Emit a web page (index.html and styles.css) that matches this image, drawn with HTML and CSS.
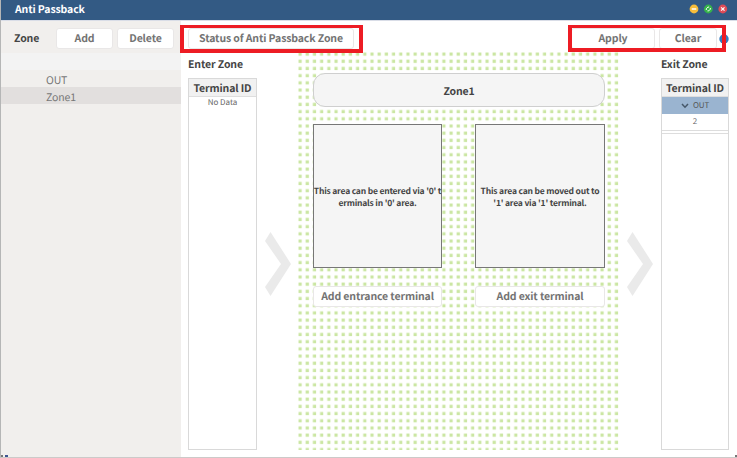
FILE: index.html
```html
<!DOCTYPE html>
<html lang="en">
<head>
<meta charset="utf-8">
<title>Anti Passback</title>
<link rel="stylesheet" href="styles.css">
</head>
<body>
<div class="window">
  <header class="titlebar">
    <span class="title">Anti Passback</span>
    <svg class="controls" width="40" height="10" viewBox="0 0 40 10">
      <circle cx="5" cy="5" r="4.400" fill="#f6bd3b"/><path d="M2.700 5h4.600" stroke="#fff" stroke-width="1.500"/>
      <circle cx="19.300" cy="5" r="4.400" fill="#35b34a"/><path d="M17.300 6V4.800l1.600-1.700h1.200M21.300 4v1.200l-1.600 1.700h-1.200" fill="none" stroke="#fff" stroke-width="1"/>
      <circle cx="33.800" cy="5" r="4.400" fill="#df4b57"/><path d="M32.100 3.300l3.400 3.400m0-3.400l-3.400 3.400" stroke="#fff" stroke-width="1.200"/>
    </svg>
  </header>
  <div class="body">
    <aside class="sidebar">
      <div class="side-tools">
        <span class="side-label">Zone</span>
        <button class="btn">Add</button>
        <button class="btn">Delete</button>
      </div>
      <div class="side-head"></div>
      <div class="zone">OUT</div>
      <div class="zone selected">Zone1</div>
    </aside>
    <main class="main">
      <div class="toolbar">
        <button class="btn status">Status of Anti Passback Zone</button>
        <button class="btn apply">Apply</button>
        <button class="btn clear">Clear</button>
        <svg class="help" width="10" height="10" viewBox="0 0 10 10"><circle cx="5" cy="5" r="4.700" fill="#347bc0"/><path d="M3.500 4c0-2 3-2 3-.2C6.500 4.700 5 4.700 5 6M5 7v1" fill="none" stroke="#dceaf7" stroke-width="1"/></svg>
      </div>
      <div class="content">
        <section class="side-zone">
          <h2>Enter Zone</h2>
          <div class="table">
            <div class="th">Terminal ID</div>
            <div class="empty">No Data</div>
          </div>
        </section>
        <svg class="arrow" width="26" height="64" viewBox="0 0 26 64"><path d="M5.500 0L26 32L5.500 64L0 55L16 32L0 9Z" fill="#eaeaea"/></svg>
        <section class="canvas">
          <svg class="dots" width="321" height="398">
            <defs><pattern id="dot" width="7.190" height="7.190" patternUnits="userSpaceOnUse"><rect x=".5" y=".5" width="3.200" height="3.200" fill="#cbe6a3"/></pattern></defs>
            <rect width="321" height="398" fill="url(#dot)"/>
          </svg>
          <div class="zone-name">Zone1</div>
          <div class="pair areas">
            <div class="area"><p>This area can be entered via '0' t<br>erminals in '0' area.</p></div>
            <div class="area"><p>This area can be moved out to<br>'1' area via '1' terminal.</p></div>
          </div>
          <div class="pair">
            <button class="btn">Add entrance terminal</button>
            <button class="btn">Add exit terminal</button>
          </div>
        </section>
        <svg class="arrow" width="26" height="64" viewBox="0 0 26 64"><path d="M5.500 0L26 32L5.500 64L0 55L16 32L0 9Z" fill="#eaeaea"/></svg>
        <section class="side-zone exit">
          <h2>Exit Zone</h2>
          <div class="table">
            <div class="th">Terminal ID</div>
            <div class="group"><svg width="8" height="6" viewBox="0 0 8 6"><path d="M1 1l3 3.200 3-3.200" fill="none" stroke="#46586a" stroke-width="1.500"/></svg>OUT</div>
            <div class="cell">2</div>
            <div class="strip"></div>
          </div>
        </section>
      </div>
    </main>
  </div>
  <div class="mark mark-status"></div>
  <div class="mark mark-actions"></div>
  <i class="speck speck-a"></i><i class="speck speck-b"></i><i class="speck speck-c"></i>
</div>
</body>
</html>
```

FILE: styles.css
```css
* { box-sizing: border-box; margin: 0; padding: 0; }
body {
  width: 737px; height: 458px; overflow: hidden; background: #fff;
  font-family: "Noto Sans CJK KR", "Noto Sans", sans-serif; color: #444;
  font-size: 10.5px; letter-spacing: -0.12px; text-rendering: geometricPrecision;
}
.window {
  position: relative; width: 737px; height: 458px;
  display: flex; flex-direction: column;
  border-left: 1px solid #b5b6b6; border-bottom: 1px solid #cccac9;
}
.titlebar {
  height: 20px; flex: none; background: #335a84; color: #fff;
  display: flex; align-items: center; justify-content: space-between;
  padding: 0 8px 2px 14px;
}
.title { font-weight: 700; line-height: 18px; padding-top: 1px; }
.body { flex: 1; display: flex; min-height: 0; border-top: 1px solid #d9dde7; }
.sidebar { width: 180px; flex: none; background: #f1efed; }
.side-tools { height: 32px; display: flex; align-items: center; padding: 3px 0 0 13px; gap: 4px; }
.side-label { width: 38px; font-weight: 700; line-height: 20px; padding-top: 1px; white-space: nowrap; }
.btn {
  height: 21px; border: 1px solid #e9e7e7; border-radius: 3px; background: #fff;
  font-family: inherit; font-weight: 700; font-size: inherit; letter-spacing: inherit;
  line-height: 18px; padding-top: 1px;
  color: #737373; text-align: center; white-space: nowrap;
  text-rendering: inherit;
}
.side-tools .btn { width: 57px; }
.side-head { height: 17px; background: #f3f3f3; }
.zone { height: 17px; padding-left: 45px; line-height: 21px; color: #777; }
.zone.selected { background: #e2dfde; }
.main { flex: 1; display: flex; flex-direction: column; min-width: 0; }
.toolbar { height: 32px; flex: none; display: flex; align-items: center; padding: 3px 0 0 7px; }
.status { width: 166px; }
.apply { width: 84px; margin-left: 217px; }
.clear { width: 58px; margin-left: 4px; }
.help { flex: none; margin-left: 2px; }
.content { flex: 1; display: flex; padding-left: 7px; }
.side-zone { width: 69px; flex: none; padding-top: 2px; }
.exit { margin-left: 1px; width: 68px; }
h2 { height: 23px; font-size: inherit; font-weight: 700; line-height: 19px; white-space: nowrap; }
.table { height: 372px; border: 1px solid #d9d9d9; }
.th {
  height: 18px; background: #f1f1f1; border-bottom: 1px solid #dedede;
  font-weight: 700; line-height: 19px; text-align: center; white-space: nowrap;
}
.empty { font-size: 8px; letter-spacing: 0; line-height: 11px; text-align: center; color: #666; }
.arrow { flex: none; margin: 179px 7px 0 8px; }
.canvas { position: relative; width: 321px; flex: none; height: 398px; padding: 21px 14px 0 15px; margin-top: -1px; }
.dots { position: absolute; left: 0; top: 0; z-index: -1; }
.zone-name {
  height: 34px; border: 1px solid #cfcfcf; border-radius: 12px; background: #f5f5f5;
  font-weight: 700; line-height: 35px; text-align: center;
}
.pair { display: grid; grid-template-columns: 129px 130px; justify-content: space-between; margin-top: 18px; }
.areas { margin-top: 17px; }
.area {
  height: 144px; border: 1px solid #777; background: #f5f5f5;
  display: flex; align-items: center; justify-content: center; padding-top: 1px;
  font-size: 8.5px; letter-spacing: -0.2px; font-weight: 700; line-height: 12px; text-align: center; white-space: nowrap;
}
.group {
  height: 17px; background: #9ab4d0; display: flex; align-items: center; justify-content: center;
  gap: 4px; font-size: 8px; line-height: 15px; color: #555;
}
.cell { height: 17px; font-size: 8px; line-height: 16px; text-align: center; color: #666; border-bottom: 1px solid #ddd; }
.strip { height: 3px; border-bottom: 1px solid #ddd; }
.mark { position: absolute; top: 25px; height: 28px; border: 4px solid #ed1c24; border-width: 3px 4px 4px; }
.mark-status { left: 179px; width: 183px; }
.mark-actions { left: 567px; width: 158px; height: 27px; }
.speck { position: absolute; top: 455px; width: 2px; height: 2px; background: #777; }
.speck-a { left: 0; }
.speck-b { left: 4px; width: 3px; background: #3c5490; }
.speck-c { left: 734px; }
```
